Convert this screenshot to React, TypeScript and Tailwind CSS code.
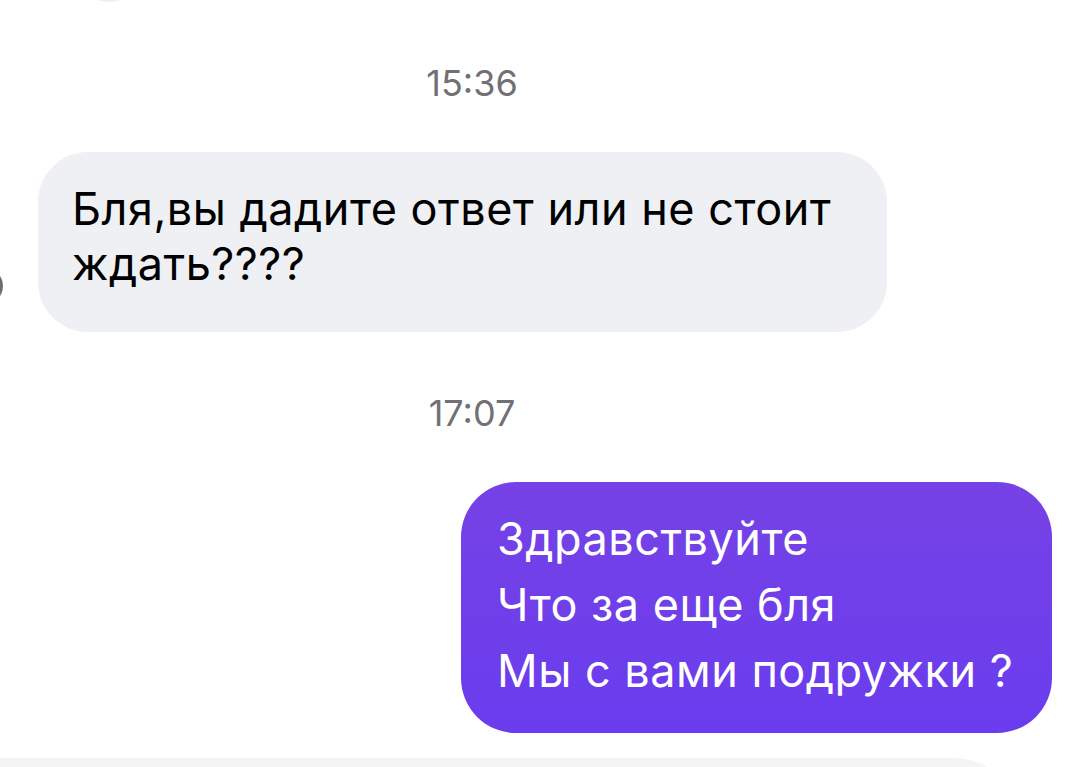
import React from 'react';

const font = { fontFamily: 'Inter, "Liberation Sans", Arial, sans-serif' };

const Stamp: React.FC<{ time: string }> = ({ time }) => (
  <div className="w-[944px] flex justify-center text-[36px] leading-[40px] text-[#707075]">{time}</div>
);

const App = () => {
  return (
    <div className="relative h-[767px] w-[1076px] overflow-hidden bg-white" style={font}>
      {/* edge of the previous bubble and the sender avatar, cut off by the crop */}
      <div className="absolute left-[80px] top-[-40px] h-[42px] w-[58px] rounded-b-full bg-[#efeff2]" />
      <div className="absolute left-[-33px] top-[268px] h-[36px] w-[36px] rounded-full bg-[#6f6f72]" />

      <div className="flex flex-col pt-[63px]">
        <Stamp time="15:36" />

        <div className="mt-[49px] ml-[38px] h-[180px] w-[849px] rounded-[50px] bg-[#eff0f4] pl-[34px] pt-[29px] text-[45px] leading-[55px] tracking-[0.5px] text-black">
          <div className="whitespace-nowrap">Бля,вы дадите ответ или не стоит</div>
          <div className="whitespace-nowrap">ждать????</div>
        </div>

        <div className="mt-[61px]">
          <Stamp time="17:07" />
        </div>

        <div className="mt-[49px] flex justify-end pr-[24px]">
          <div className="h-[251px] w-[591px] rounded-[55px] bg-gradient-to-b from-[#7642e6] to-[#6a3cee] pl-[36px] pt-[24px] text-[45px] leading-[66px] tracking-[0.5px] text-white">
            <div className="whitespace-nowrap">Здравствуйте</div>
            <div className="whitespace-nowrap">Что за еще бля</div>
            <div className="whitespace-nowrap">Мы с вами подружки ?</div>
          </div>
        </div>

        <div className="mt-[25px] h-[60px] w-[1015px] rounded-tr-[60px] bg-[#f4f4f6]" />
      </div>
    </div>
  );
};

export default App;
